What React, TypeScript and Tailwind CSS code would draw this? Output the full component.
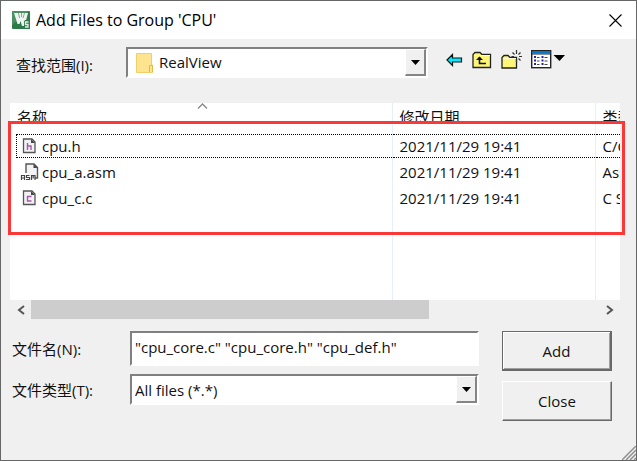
import React from "react";

interface FileItem {
  name: string;
  date: string;
  type: string;
  icon: "h" | "c" | "asm";
}

const files: FileItem[] = [
  { name: "cpu.h", date: "2021/11/29 19:41", type: "C/C++ Header", icon: "h" },
  { name: "cpu_a.asm", date: "2021/11/29 19:41", type: "Assembler Source", icon: "asm" },
  { name: "cpu_c.c", date: "2021/11/29 19:41", type: "C Source", icon: "c" },
];

const AppLogo = () => (
  <svg width="18" height="18" viewBox="0 0 18 18" aria-hidden="true">
    <rect width="18" height="18" rx="1" fill="#2f7a49" />
    <path d="M0 1Q0 0 1 0H17L0 14Z" fill="#4c8f62" />
    <path d="M2 2H16L12.500 15H10L8.500 10L7.500 13H5.500Z" fill="#eef5f0" />
    <path d="M6.500 2L7.500 7M9.500 2V6M12.500 2L11 7" stroke="#5f9c72" strokeWidth=".8" fill="none" />
    <path d="M12 18V10L13.500 9H18V18Z" fill="#2f7a49" />
    <path d="M16.500 11H13.500V13.500H16V16H13" stroke="#e4efe7" strokeWidth="1.300" fill="none" />
  </svg>
);

const FolderIcon = () => (
  <svg width="17" height="20" viewBox="0 0 17 20" aria-hidden="true">
    <path d="M.5.5H15.500V12H16.500V19.500H.5Z" fill="#ffe48f" stroke="#f0cf68" />
    <path d="M13.500 19V12.500H16.500V19" fill="#ffe48f" stroke="#e3b94a" />
  </svg>
);

const FileIcon = ({ kind }: { kind: FileItem["icon"] }) => {
  if (kind === "asm") {
    return (
      <svg width="20" height="18" viewBox="0 0 20 18" aria-hidden="true">
        <path d="M6 10V1H14L17.500 4.500V15H15" fill="#f3f3f6" stroke="#555" strokeWidth="1.400" />
        <path d="M13.500 1V5H17.500Z" fill="#444" />
        <path
          d="M1.500 17V12.500H4.500V17M1.500 15H4.500M9.500 12.500H6.500V14.500H9.500V16.500H6M11.500 17V12.500H15V17M13.200 13V15.500"
          fill="none"
          stroke="#444"
          strokeWidth="1.200"
        />
      </svg>
    );
  }
  return (
    <svg width="20" height="18" viewBox="0 0 20 18" aria-hidden="true">
      <path d="M3.500 2H12L15 5V15.500H3.500Z" fill="#f3f1f6" stroke="#555" strokeWidth="1.300" />
      <path d="M11 2V6H15Z" fill="#444" />
      {kind === "h" ? (
        <path d="M7.500 6V13M7.500 9H11V13" fill="none" stroke="#a55aa5" strokeWidth="1.400" />
      ) : (
        <path d="M11.500 7.500H7.500V12H11.500" fill="none" stroke="#a55aa5" strokeWidth="1.400" />
      )}
    </svg>
  );
};

const BackIcon = () => (
  <svg width="17" height="14" viewBox="0 0 17 14" aria-hidden="true">
    <path d="M1 7L6.500 1.500V5H15.500V9H6.500V12.500Z" fill="#00eaff" stroke="#111" strokeWidth="1.200" />
  </svg>
);

const UpIcon = () => (
  <svg width="20" height="18" viewBox="0 0 20 18" aria-hidden="true">
    <path d="M1 16.500V3.500L3 1.500H8L10 3.500H18.500V16.500Z" fill="#fdf578" stroke="#222" strokeWidth="1.300" />
    <path d="M2 4.500H18" stroke="#fffbd0" />
    <path d="M7.500 6V12.500H14" fill="none" stroke="#111" strokeWidth="1.600" />
    <path d="M4 9L7.500 5.500L11 9Z" fill="#111" />
  </svg>
);

const NewFolderIcon = () => (
  <svg width="21" height="20" viewBox="0 0 21 20" aria-hidden="true">
    <path d="M1 18V7.500L3 5.500H7L9 7.500H15.500V18Z" fill="#fdf578" stroke="#222" strokeWidth="1.300" />
    <path d="M2 8.500H15" stroke="#fffbd0" />
    <path
      d="M15.500 0V4M15.500 9V12M10.500 6.500H13M18 6.500H21M11.500 2.500L13.500 4.500M19.500 2.500L17.500 4.500M17.500 8.500L19.500 10.500"
      stroke="#333"
      strokeWidth="1.200"
    />
  </svg>
);

const ViewIcon = () => (
  <svg width="34" height="19" viewBox="0 0 34 19" aria-hidden="true">
    <rect x=".7" y=".7" width="19" height="17" fill="#fff" stroke="#222" strokeWidth="1.400" />
    <rect x="1" y="1" width="18.400" height="2.500" fill="#0876c9" />
    <path d="M1 4H19" stroke="#222" />
    <path
      d="M4 6V8M11.500 6V8M4 9.500V11.500M11.500 9.500V11.500M4 13V15M11.500 13V15"
      stroke="#2525a5"
      strokeWidth="2"
    />
    <path d="M6 7.500H8.500M13.500 7.500H16.500M6 11H8.500M13.500 11H16.500M6 14.500H8.500M13.500 14.500H16.500" stroke="#444" />
    <path d="M22.500 5H34L28.500 11Z" fill="#000" />
  </svg>
);

const DropArrow = () => (
  <span className="pointer-events-none flex w-[21px] shrink-0 items-center justify-center border-r-2 border-b-2 border-t border-l border-t-white border-l-white border-r-[#858585] border-b-[#858585] bg-[#f0f0f0]">
    <svg width="9" height="5" viewBox="0 0 9 5" aria-hidden="true">
      <path d="M0 0H9L4.500 5Z" fill="#000" />
    </svg>
  </span>
);

const sunken = "border-2 border-t-[#808080] border-l-[#808080] border-r-white border-b-white bg-white";

export default function App() {
  return (
    <div className="relative flex min-h-screen flex-col border border-[#666] bg-[#f0f0f0] font-['Open_Sans','Noto_Sans_CJK_SC',sans-serif] text-[15px] leading-5 text-[#111]">
      <header className="flex h-[38px] items-center bg-white pr-[14px] pl-[11px]">
        <AppLogo />
        <h1 className="ml-[6px] flex-1 text-base text-black">Add Files to Group 'CPU'</h1>
        <button type="button" aria-label="Close window">
          <svg width="13" height="13" viewBox="0 0 13 13" aria-hidden="true">
            <path d="M.5.5L12.500 12.500M12.500.5L.5 12.500" stroke="#000" strokeWidth="1.100" />
          </svg>
        </button>
      </header>

      <div className="mt-2 flex items-center pl-[15px]">
        <label htmlFor="look-in" className="w-[110px] pt-1">
          查找范围(I):
        </label>
        <div className={`flex h-[31px] w-[302px] ${sunken}`}>
          <span className="flex items-center pl-2">
            <FolderIcon />
          </span>
          <select id="look-in" className="min-w-0 flex-1 appearance-none bg-transparent pb-[2px] pl-[6px] outline-none">
            <option>RealView</option>
          </select>
          <DropArrow />
        </div>
        <div className="ml-[18px] flex items-center gap-[9px] pb-[6px]">
          <button type="button" aria-label="Back"><BackIcon /></button>
          <button type="button" aria-label="Up one level"><UpIcon /></button>
          <button type="button" aria-label="New folder"><NewFolderIcon /></button>
          <button type="button" aria-label="View menu"><ViewIcon /></button>
        </div>
      </div>

      <div className="relative mt-[25px] mr-4 ml-[9px]">
        <div className="flex h-[197px] overflow-hidden bg-white">
          <table className="h-full w-[760px] shrink-0 table-fixed border-collapse text-left">
            <colgroup>
              <col className="w-[382px]" />
              <col className="w-[203px]" />
              <col />
            </colgroup>
            <thead>
              <tr className="h-[30px] align-top">
                <th className="relative border-r border-[#e5f0fa] p-0 font-normal">
                  <div className="h-5 overflow-hidden pt-1 pl-[7px]">名称</div>
                  <svg className="absolute top-0 left-1/2 -ml-1" width="11" height="6" viewBox="0 0 11 6" aria-hidden="true">
                    <path d="M1 5.500L5.500 1L10 5.500" fill="none" stroke="#888" strokeWidth="1.300" />
                  </svg>
                </th>
                <th className="border-r border-[#e5f0fa] p-0 font-normal">
                  <div className="h-5 overflow-hidden pt-1 pl-[7px]">修改日期</div>
                </th>
                <th className="p-0 font-normal">
                  <div className="h-5 overflow-hidden pt-1 pl-[7px]">类型</div>
                </th>
              </tr>
            </thead>
            <tbody>
              {files.map((file, i) => (
                <tr key={file.name} className="h-[26px]">
                  <td className="border-r border-[#e5f0fa] p-0">
                    <div
                      className={
                        i === 0
                          ? "ml-[6px] flex h-6 items-center border-y border-l border-dotted border-black pl-[3px]"
                          : "ml-[6px] flex h-6 items-center pl-1"
                      }
                    >
                      <FileIcon kind={file.icon} />
                      <span className="ml-[2px]">{file.name}</span>
                    </div>
                  </td>
                  <td className="border-r border-[#e5f0fa] p-0">
                    <div
                      className={
                        i === 0
                          ? "flex h-6 items-center border-y border-dotted border-black pl-[7px]"
                          : "flex h-6 items-center pl-[7px]"
                      }
                    >
                      {file.date}
                    </div>
                  </td>
                  <td className="p-0 whitespace-nowrap">
                    <div
                      className={
                        i === 0
                          ? "flex h-6 items-center border-y border-dotted border-black pl-[7px]"
                          : "flex h-6 items-center pl-[7px]"
                      }
                    >
                      {file.type}
                    </div>
                  </td>
                </tr>
              ))}
              <tr>
                <td className="border-r border-[#e5f0fa]" />
                <td className="border-r border-[#e5f0fa]" />
                <td />
              </tr>
            </tbody>
          </table>
        </div>

        <div className="flex h-[19px] items-stretch justify-between">
          <button type="button" aria-label="Scroll left" className="flex w-[21px] items-center justify-center">
            <svg width="8" height="10" viewBox="0 0 8 10" aria-hidden="true">
              <path d="M7 1L2 5L7 9" fill="none" stroke="#555" strokeWidth="2" />
            </svg>
          </button>
          <div className="flex flex-1">
            <div className="w-[70%] bg-[#cdcdcd]" />
          </div>
          <button type="button" aria-label="Scroll right" className="flex w-[21px] items-center justify-center">
            <svg width="8" height="10" viewBox="0 0 8 10" aria-hidden="true">
              <path d="M1 1L6 5L1 9" fill="none" stroke="#555" strokeWidth="2" />
            </svg>
          </button>
        </div>

        {/* highlight around the files */}
        <div className="pointer-events-none absolute top-[18px] -right-[5px] -left-[2px] h-[114px] border-3 border-[#fb3838]" />
      </div>

      <form className="mt-3 flex pr-6 pl-[11px]" onSubmit={(e) => e.preventDefault()}>
        <div className="flex flex-1 flex-col gap-2">
          <div className="flex items-center">
            <label htmlFor="file-name" className="w-[118px]">
              文件名(N):
            </label>
            <input
              id="file-name"
              type="text"
              defaultValue={'"cpu_core.c" "cpu_core.h" "cpu_def.h"'}
              className={`h-[35px] min-w-0 flex-1 pb-1 pl-[3px] outline-none ${sunken}`}
            />
          </div>
          <div className="flex items-center">
            <label htmlFor="file-type" className="w-[118px]">
              文件类型(T):
            </label>
            <div className={`flex h-[31px] min-w-0 flex-1 ${sunken}`}>
              <select id="file-type" className="min-w-0 flex-1 appearance-none bg-transparent pl-[3px] outline-none">
                <option>All files (*.*)</option>
              </select>
              <DropArrow />
            </div>
          </div>
        </div>
        <div className="ml-[23px] flex w-[110px] flex-col gap-[10px]">
          <button
            type="submit"
            className="h-10 border-t border-r-2 border-b-2 border-l border-[#696969] shadow-[inset_1px_1px_0_#fff,inset_-1px_-1px_0_#a0a0a0]"
          >
            Add
          </button>
          <button
            type="button"
            className="h-10 border border-t-white border-r-[#696969] border-b-[#696969] border-l-white shadow-[inset_-1px_-1px_0_#a0a0a0]"
          >
            Close
          </button>
        </div>
      </form>

      <svg className="absolute right-0 bottom-0" width="14" height="14" viewBox="0 0 14 14" aria-hidden="true">
        <path d="M0 14L14 0M4 14L14 4M8 14L14 8M12 14L14 12" stroke="#909090" strokeWidth="1.500" />
      </svg>
    </div>
  );
}
